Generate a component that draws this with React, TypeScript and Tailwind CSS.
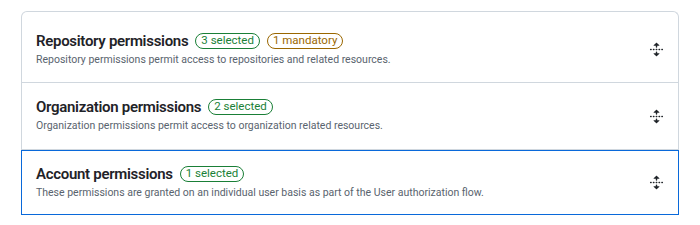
import React from 'react';

type Badge = { label: string; tone: 'green' | 'amber' };

interface Section {
  title: string;
  description: string;
  badges: Badge[];
  focused?: boolean;
}

const sections: Section[] = [
  {
    title: 'Repository permissions',
    description: 'Repository permissions permit access to repositories and related resources.',
    badges: [
      { label: '3 selected', tone: 'green' },
      { label: '1 mandatory', tone: 'amber' },
    ],
  },
  {
    title: 'Organization permissions',
    description: 'Organization permissions permit access to organization related resources.',
    badges: [{ label: '2 selected', tone: 'green' }],
  },
  {
    title: 'Account permissions',
    description:
      'These permissions are granted on an individual user basis as part of the User authorization flow.',
    badges: [{ label: '1 selected', tone: 'green' }],
    focused: true,
  },
];

function UnfoldIcon() {
  return (
    <svg width="15" height="15" viewBox="0 0 16 16" fill="#1f2328" aria-hidden="true">
      <path d="m8.177.677 2.896 2.896a.25.25 0 0 1-.177.427H8.75v1.25a.75.75 0 0 1-1.5 0V4H5.104a.25.25 0 0 1-.177-.427L7.823.677a.25.25 0 0 1 .354 0ZM7.25 10.75a.75.75 0 0 1 1.5 0V12h2.146a.25.25 0 0 1 .177.427l-2.896 2.896a.25.25 0 0 1-.354 0l-2.896-2.896A.25.25 0 0 1 5.104 12H7.25v-1.25Zm-5-2a.75.75 0 0 0 0-1.5h-.5a.75.75 0 0 0 0 1.5h.5ZM6 8a.75.75 0 0 1-.75.75h-.5a.75.75 0 0 1 0-1.5h.5A.75.75 0 0 1 6 8Zm2.25.75a.75.75 0 0 0 0-1.5h-.5a.75.75 0 0 0 0 1.5h.5ZM12 8a.75.75 0 0 1-.75.75h-.5a.75.75 0 0 1 0-1.5h.5A.75.75 0 0 1 12 8Zm2.25.75a.75.75 0 0 0 0-1.5h-.5a.75.75 0 0 0 0 1.5h.5Z" />
    </svg>
  );
}

function Pill({ label, tone }: Badge) {
  const toneClass =
    tone === 'green' ? 'border-[#1a7f37] text-[#1a7f37]' : 'border-[#9a6700] text-[#9a6700]';
  return (
    <span
      className={`inline-flex items-center h-[16px] px-[5px] rounded-full border text-[11.5px] leading-none ${toneClass}`}
    >
      {label}
    </span>
  );
}

export default function App() {
  return (
    <div
      className="w-[700px] h-[225px] bg-white pt-[11px] px-[21px]"
      style={{ fontFamily: 'Roboto, "Noto Sans", "Liberation Sans", sans-serif' }}
    >
      <div className="rounded-t-md border border-[#d0d7de] border-b-0">
        {sections.map((s, i) => (
          <div
            key={s.title}
            className={
              s.focused
                ? 'flex items-center justify-between pl-[14px] pr-[14px] border border-[#0969da] -mx-px -mb-px h-[65px]'
                : `flex items-center justify-between pl-[14px] pr-[14px] border-b border-[#d0d7de] ${
                    i === 0 ? 'h-[71px] pt-[5px]' : 'h-[67px]'
                  }`
            }
          >
            <div className="flex flex-col">
              <div className="flex items-center gap-[7px]">
                <h3 className="text-[15px] font-semibold tracking-[-0.3px] text-[#1f2328] leading-[20px]">
                  {s.title}
                </h3>
                {s.badges.map((b) => (
                  <Pill key={b.label} {...b} />
                ))}
              </div>
              <p className="text-[10.5px] text-[#59636e] leading-[18px]">{s.description}</p>
            </div>
            <UnfoldIcon />
          </div>
        ))}
      </div>
    </div>
  );
}
